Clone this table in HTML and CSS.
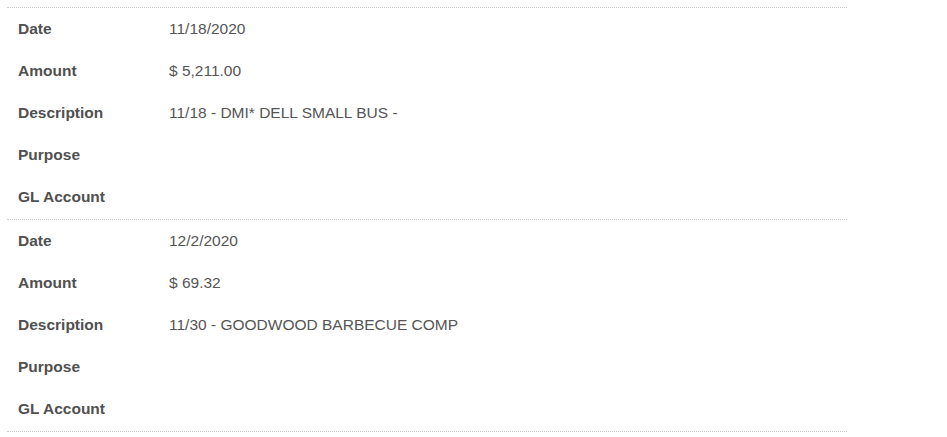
FILE: index.html
```html
<!DOCTYPE html>
<html lang="en">
<head>
    <meta charset="UTF-8">
    <meta name="viewport" content="width=device-width, initial-scale=1.0">
    <title>Transactions</title>
    <link rel="stylesheet" href="styles.css">
</head>
<body>
    <div class="records">
        <div class="record">
            <div class="row"><div class="label">Date</div><div class="value">11/18/2020</div></div>
            <div class="row"><div class="label">Amount</div><div class="value">$ 5,211.00</div></div>
            <div class="row"><div class="label">Description</div><div class="value">11/18 - DMI* DELL SMALL BUS -</div></div>
            <div class="row"><div class="label">Purpose</div><div class="value"></div></div>
            <div class="row"><div class="label">GL Account</div><div class="value"></div></div>
        </div>
        <div class="record">
            <div class="row"><div class="label">Date</div><div class="value">12/2/2020</div></div>
            <div class="row"><div class="label">Amount</div><div class="value">$ 69.32</div></div>
            <div class="row"><div class="label">Description</div><div class="value">11/30 - GOODWOOD BARBECUE COMP</div></div>
            <div class="row"><div class="label">Purpose</div><div class="value"></div></div>
            <div class="row"><div class="label">GL Account</div><div class="value"></div></div>
        </div>
    </div>
</body>
</html>
```

FILE: styles.css
```css
body {
    margin: 0;
    font-family: "Liberation Sans", Arial, Helvetica, sans-serif;
    font-size: 15.5px;
    color: #555;
    background: #fff;
}
.records {
    width: 840px;
    margin: 7px 0 0 7px;
    border-bottom: 1px dotted #c8c8c8;
}
.record {
    border-top: 1px dotted #c8c8c8;
    padding-bottom: 1px;
}
.row {
    display: grid;
    grid-template-columns: 151px 1fr;
    height: 42px;
    align-items: center;
    padding-left: 11px;
}
.label {
    font-weight: bold;
    color: #505050;
}
.value {
    color: #555;
}
```
